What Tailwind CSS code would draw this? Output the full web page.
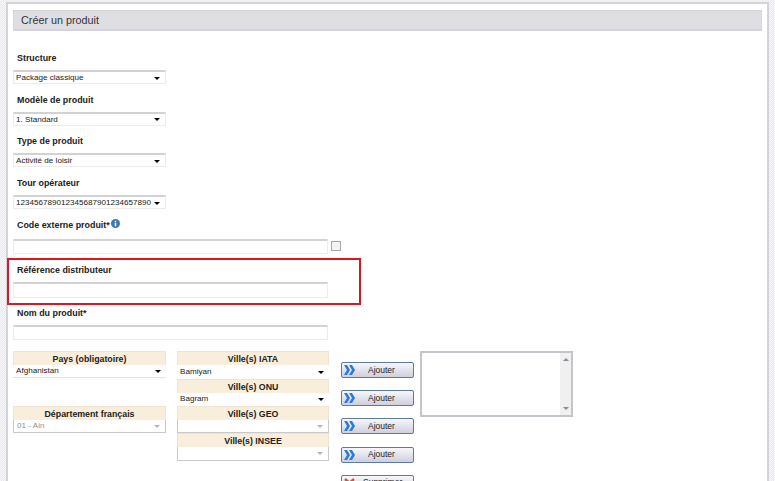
<!DOCTYPE html>
<html lang="fr">
<head>
  <meta charset="UTF-8">
  <title>Créer un produit</title>
  <script src="https://cdn.jsdelivr.net/npm/@tailwindcss/browser@4"></script>
</head>
<body class="h-[481px] overflow-hidden bg-[repeating-conic-gradient(#e8e8ed_0%_25%,#f8f8fa_0%_50%)] bg-[length:2px_2px] font-['Liberation_Sans',Arial,sans-serif] text-[#222]">
  <div class="relative ml-[6px] mt-[2px] w-[763px] h-[600px] border-l-2 border-t-2 border-r-2 border-[#d3d3dc] bg-white">
    <main class="pl-[5px] pr-[5px] pt-[6px]">
      <h1 class="h-[21px] pl-[7px] bg-[#dfdfe3] border border-b-2 border-[#d5d3de] text-[10.8px] leading-[19px] text-[#333]">Créer un produit</h1>

      <!-- champs -->
      <div class="mt-[21px] w-[345px] text-[8.9px]">
        <p class="pl-[4px] h-[12px] leading-[12px] font-bold">Structure</p>
        <div class="mt-[6px] w-[153px] h-[14px] pl-[2px] pr-[5px] pt-[1px] flex items-center justify-between bg-white border-t-2 border-t-[#d2d2d6] border-x border-b border-x-[#ececef] border-b-[#ececef] text-[8.1px] rounded-[1px]">
          <span>Package classique</span><span class="w-0 h-0 border-x-[3px] border-x-transparent border-t-[3px] border-t-black"></span>
        </div>
        <p class="mt-[9.7px] pl-[4px] h-[12px] leading-[12px] font-bold">Modèle de produit</p>
        <div class="mt-[6px] w-[153px] h-[14px] pl-[2px] pr-[5px] pt-[1px] flex items-center justify-between bg-white border-t-2 border-t-[#d2d2d6] border-x border-b border-x-[#ececef] border-b-[#ececef] text-[8.1px] rounded-[1px]">
          <span>1. Standard</span><span class="w-0 h-0 border-x-[3px] border-x-transparent border-t-[3px] border-t-black"></span>
        </div>
        <p class="mt-[9.7px] pl-[4px] h-[12px] leading-[12px] font-bold">Type de produit</p>
        <div class="mt-[6px] w-[153px] h-[14px] pl-[2px] pr-[5px] pt-[1px] flex items-center justify-between bg-white border-t-2 border-t-[#d2d2d6] border-x border-b border-x-[#ececef] border-b-[#ececef] text-[8.1px] rounded-[1px]">
          <span>Activité de loisir</span><span class="w-0 h-0 border-x-[3px] border-x-transparent border-t-[3px] border-t-black"></span>
        </div>
        <p class="mt-[9.7px] pl-[4px] h-[12px] leading-[12px] font-bold">Tour opérateur</p>
        <div class="mt-[6px] w-[153px] h-[14px] pl-[2px] pr-[5px] pt-[1px] flex items-center justify-between bg-white border-t-2 border-t-[#d2d2d6] border-x border-b border-x-[#ececef] border-b-[#ececef] text-[8.1px] rounded-[1px]">
          <span>123456789012345687901234657890</span><span class="w-0 h-0 border-x-[3px] border-x-transparent border-t-[3px] border-t-black"></span>
        </div>

        <p class="mt-[9px] pl-[4px] h-[14px] leading-[14px] font-bold flex items-center gap-[1px]">Code externe produit*
          <svg class="w-[9px] h-[9px] mb-[3px]" viewBox="0 0 10 10"><circle cx="5" cy="5" r="5" fill="#3f78b0"/><rect x="4.2" y="4.2" width="1.6" height="3.8" fill="#fff"/><rect x="4.2" y="2" width="1.6" height="1.5" fill="#fff"/></svg>
        </p>
        <div class="mt-[7px] flex items-center">
          <div class="w-[315px] h-[15px] bg-white border-t-2 border-t-[#d2d2d6] border-x border-b border-x-[#ececef] border-b-[#ececef] rounded-[1px]"></div>
          <div class="ml-[3px] mb-[1px] w-[10px] h-[10px] bg-[#f3f3f3] border border-[#a9a9a9]"></div>
        </div>

        <p class="mt-[10px] pl-[4px] h-[12px] leading-[12px] font-bold">Référence distributeur</p>
        <div class="mt-[6px] w-[315px] h-[16px] bg-white border-t-2 border-t-[#d2d2d6] border-x border-b border-x-[#ececef] border-b-[#ececef] rounded-[1px]"></div>

        <p class="mt-[9px] pl-[4px] h-[12px] leading-[12px] font-bold">Nom du produit*</p>
        <div class="mt-[6px] w-[315px] h-[15px] bg-white border-t-2 border-t-[#d2d2d6] border-x border-b border-x-[#ececef] border-b-[#ececef] rounded-[1px]"></div>
      </div>

      <!-- localisation -->
      <div class="mt-[11px] flex items-start text-[8.8px]">
        <div class="w-[153px]">
          <p class="h-[14px] leading-[14px] text-center font-bold bg-[#f9eedb] border-t border-x border-[#efe4d0]">Pays (obligatoire)</p>
          <div class="h-[13px] pl-[3px] pr-[5px] flex items-center justify-between border-b border-[#e4e4e8] text-[8.1px]">
            <span>Afghanistan</span><span class="w-0 h-0 border-x-[3px] border-x-transparent border-t-[3px] border-t-black"></span>
          </div>
          <p class="mt-[28px] h-[14px] leading-[14px] text-center font-bold bg-[#f9eedb] border-t border-x border-[#efe4d0]">Département français</p>
          <div class="h-[13px] pl-[3px] pr-[5px] flex items-center justify-between border border-t-0 border-[#c9c9c9] text-[8.1px] text-[#8f8f8f]">
            <span>01 - Ain</span><span class="w-0 h-0 border-x-[3px] border-x-transparent border-t-[3px] border-t-[#b5b5b5]"></span>
          </div>
        </div>

        <div class="ml-[11px] w-[152px]">
          <p class="h-[14px] leading-[14px] text-center font-bold bg-[#f9eedb] border-t border-x border-[#efe4d0]">Ville(s) IATA</p>
          <div class="h-[14px] pl-[3px] pr-[5px] flex items-center justify-between text-[8.1px]">
            <span>Bamiyan</span><span class="w-0 h-0 border-x-[3px] border-x-transparent border-t-[3px] border-t-black"></span>
          </div>
          <p class="h-[14px] leading-[14px] text-center font-bold bg-[#f9eedb] border-t border-x border-[#efe4d0]">Ville(s) ONU</p>
          <div class="h-[13px] pl-[3px] pr-[5px] flex items-center justify-between text-[8.1px]">
            <span>Bagram</span><span class="w-0 h-0 border-x-[3px] border-x-transparent border-t-[3px] border-t-black"></span>
          </div>
          <p class="h-[14px] leading-[14px] text-center font-bold bg-[#f9eedb] border-t border-x border-[#efe4d0]">Ville(s) GEO</p>
          <div class="h-[13px] pr-[5px] flex items-center justify-end border border-t-0 border-[#c9c9c9]">
            <span class="w-0 h-0 border-x-[3px] border-x-transparent border-t-[3px] border-t-[#b5b5b5]"></span>
          </div>
          <p class="h-[14px] leading-[14px] text-center font-bold bg-[#f9eedb] border-t border-x border-[#efe4d0]">Ville(s) INSEE</p>
          <div class="h-[14px] pr-[5px] flex items-center justify-end border border-t-0 border-[#c9c9c9]">
            <span class="w-0 h-0 border-x-[3px] border-x-transparent border-t-[3px] border-t-[#b5b5b5]"></span>
          </div>
        </div>

        <div class="ml-[12px] mt-[11px] w-[73px] flex flex-col gap-[12.2px] text-[8.5px]">
          <button class="h-[16px] flex items-center rounded-[2px] border border-[#5b7ba6] bg-gradient-to-b from-[#f7f7fb] to-[#cfcfde] pl-[2px]">
            <svg class="w-[11px] h-[10px]" viewBox="0 0 11 10"><path d="M0 0h3l3 5-3 5H0l3-5zM5 0h3l3 5-3 5H5l3-5z" fill="#2a7be0"/></svg>
            <span class="ml-[13px]">Ajouter</span>
          </button>
          <button class="h-[16px] flex items-center rounded-[2px] border border-[#5b7ba6] bg-gradient-to-b from-[#f7f7fb] to-[#cfcfde] pl-[2px]">
            <svg class="w-[11px] h-[10px]" viewBox="0 0 11 10"><path d="M0 0h3l3 5-3 5H0l3-5zM5 0h3l3 5-3 5H5l3-5z" fill="#2a7be0"/></svg>
            <span class="ml-[13px]">Ajouter</span>
          </button>
          <button class="h-[16px] flex items-center rounded-[2px] border border-[#5b7ba6] bg-gradient-to-b from-[#f7f7fb] to-[#cfcfde] pl-[2px]">
            <svg class="w-[11px] h-[10px]" viewBox="0 0 11 10"><path d="M0 0h3l3 5-3 5H0l3-5zM5 0h3l3 5-3 5H5l3-5z" fill="#2a7be0"/></svg>
            <span class="ml-[13px]">Ajouter</span>
          </button>
          <button class="h-[16px] flex items-center rounded-[2px] border border-[#5b7ba6] bg-gradient-to-b from-[#f7f7fb] to-[#cfcfde] pl-[2px]">
            <svg class="w-[11px] h-[10px]" viewBox="0 0 11 10"><path d="M0 0h3l3 5-3 5H0l3-5zM5 0h3l3 5-3 5H5l3-5z" fill="#2a7be0"/></svg>
            <span class="ml-[13px]">Ajouter</span>
          </button>
          <button class="h-[16px] flex items-center rounded-[2px] border border-[#5b7ba6] bg-gradient-to-b from-[#f7f7fb] to-[#cfcfde] pl-[2px]">
            <svg class="w-[11px] h-[10px]" viewBox="0 0 11 10"><path d="M1 1l9 8M10 1l-9 8" stroke="#e0502a" stroke-width="2.5"/></svg>
            <span class="ml-[8px]">Supprimer</span>
          </button>
        </div>

        <div class="ml-[6px] w-[153px] h-[66px] flex justify-end border-2 border-[#c4c4ca] bg-white">
          <div class="w-[11px] h-full bg-[#f0f0f0] flex flex-col items-center justify-between py-[5px]">
            <span class="w-0 h-0 border-x-[3px] border-x-transparent border-b-[3px] border-b-[#8c8c8c]"></span>
            <span class="w-0 h-0 border-x-[3px] border-x-transparent border-t-[3px] border-t-[#8c8c8c]"></span>
          </div>
        </div>
      </div>
    </main>

    <!-- encadré rouge -->
    <div class="absolute left-[-1px] top-[254px] w-[354px] h-[47px] border-2 border-[#e2141e]"></div>
  </div>
</body>
</html>
